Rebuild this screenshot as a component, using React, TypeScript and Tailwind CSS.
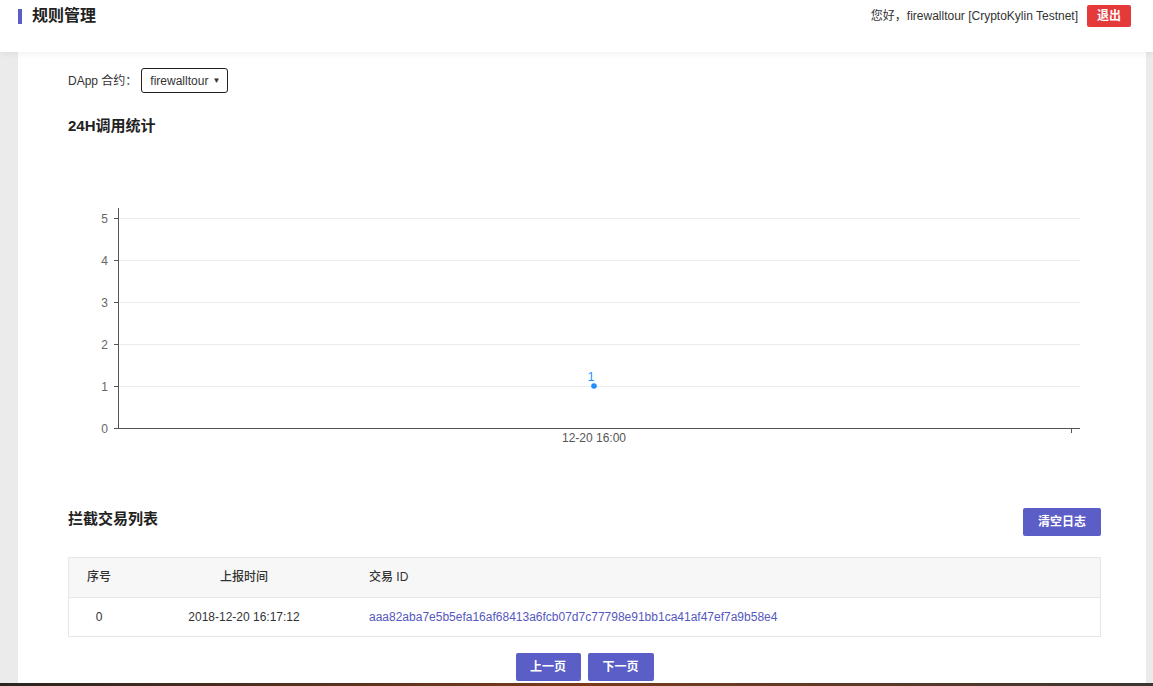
const ticks = [5, 4, 3, 2, 1, 0]

const rows = [
  {
    index: 0,
    time: "2018-12-20 16:17:12",
    txid: "aaa82aba7e5b5efa16af68413a6fcb07d7c77798e91bb1ca41af47ef7a9b58e4",
  },
]

function CallChart() {
  // y of value v: 288 - v * 42
  return (
    <svg width="1033" height="320" className="block mt-[2px]">
      {ticks.map((t) => {
        const y = 288 - t * 42
        return (
          <g key={t}>
            {t > 0 && <line x1="50" x2="1012" y1={y + 0.5} y2={y + 0.5} stroke="#ebebeb" />}
            <line x1="46" x2="50" y1={y + 0.5} y2={y + 0.5} stroke="#555" />
            <text x="40" y={y + 4.5} textAnchor="end" fontSize="12" fill="#666" fontFamily="Liberation Sans, sans-serif">
              {t}
            </text>
          </g>
        )
      })}
      <line x1="50.5" x2="50.5" y1="68" y2="288" stroke="#555" />
      <line x1="50" x2="1012" y1="288.5" y2="288.5" stroke="#555" />
      <line x1="1003.5" x2="1003.5" y1="288" y2="293" stroke="#555" />
      <text x="526" y="302" textAnchor="middle" fontSize="12" fill="#555" fontFamily="Liberation Sans, sans-serif">
        12-20 16:00
      </text>
      <circle cx="526" cy="246" r="2.8" fill="#1e90ff" />
      <text x="523" y="241" textAnchor="middle" fontSize="12" fill="#1e90ff" fontFamily="Liberation Sans, sans-serif">
        1
      </text>
    </svg>
  )
}

export default function App() {
  return (
    <div
      className="w-[1153px] h-[686px] overflow-hidden flex flex-col bg-[#ecebeb] text-[#333]"
      style={{ fontFamily: '"Liberation Sans", "Noto Sans CJK SC", sans-serif' }}
    >
      <header className="h-[52px] shrink-0 bg-white shadow-[0_2px_6px_rgba(0,0,0,0.06)] relative z-10 flex items-start justify-between pl-[18px] pr-[22px]">
        <div className="flex items-center gap-[10px] mt-[4px]">
          <span className="w-[4px] h-[15px] bg-[#5b5ec6]" />
          <span className="text-[16px] font-semibold text-[#222]">规则管理</span>
        </div>
        <div className="flex items-center gap-[9px] mt-[5px]">
          <span className="text-[12px] text-[#333]">您好，firewalltour [CryptoKylin Testnet]</span>
          <button className="w-[44px] h-[22px] rounded-[2px] bg-[#e53a3a] text-white text-[12px] font-bold">退出</button>
        </div>
      </header>

      <div className="flex-1 flex min-h-0">
        <div className="w-[18px] shrink-0" />
        <main className="flex-1 bg-white pl-[50px] pr-[45px] pt-[16px]">
          <div className="flex items-center text-[12px]">
            <span>DApp 合约：</span>
            <div className="ml-[4px] w-[87px] h-[25px] border border-[#222] rounded-[3px] flex items-center justify-between pl-[8px] pr-[7px]">
              <span>firewalltour</span>
              <span className="text-[8px]">▼</span>
            </div>
          </div>

          <h2 className="mt-[22px] text-[15px] font-bold text-[#222]">24H调用统计</h2>

          <CallChart />

          <div className="mt-[48px] flex items-center justify-between">
            <h2 className="text-[15px] font-bold text-[#222] -mt-[4px]">拦截交易列表</h2>
            <button className="w-[78px] h-[28px] rounded-[2px] bg-[#5b5ec6] text-white text-[12px] font-bold">清空日志</button>
          </div>

          <div className="mt-[21px] border border-[#e6e6e6] text-[12px]">
            <div className="grid grid-cols-[60px_230px_1fr] h-[40px] items-center bg-[#f7f7f7] border-b border-[#e6e6e6] text-[#333] font-medium">
              <span className="text-center">序号</span>
              <span className="text-center">上报时间</span>
              <span className="pl-[10px]">交易 ID</span>
            </div>
            {rows.map((r) => (
              <div key={r.index} className="grid grid-cols-[60px_230px_1fr] h-[38px] items-center text-[#333]">
                <span className="text-center">{r.index}</span>
                <span className="text-center">{r.time}</span>
                <span className="pl-[10px] text-[#5558c0]">{r.txid}</span>
              </div>
            ))}
          </div>

          <div className="mt-[16px] flex justify-center gap-[7px]">
            <button className="w-[65px] h-[28px] rounded-[2px] bg-[#5b5ec6] text-white text-[12px] font-bold">上一页</button>
            <button className="w-[66px] h-[28px] rounded-[2px] bg-[#5b5ec6] text-white text-[12px] font-bold">下一页</button>
          </div>
        </main>
        <div className="w-[7px] shrink-0" />
      </div>

      <div className="h-[3px] shrink-0 bg-gradient-to-r from-[#2a2420] via-[#7a3a1a] to-[#3a3530]" />
    </div>
  )
}
